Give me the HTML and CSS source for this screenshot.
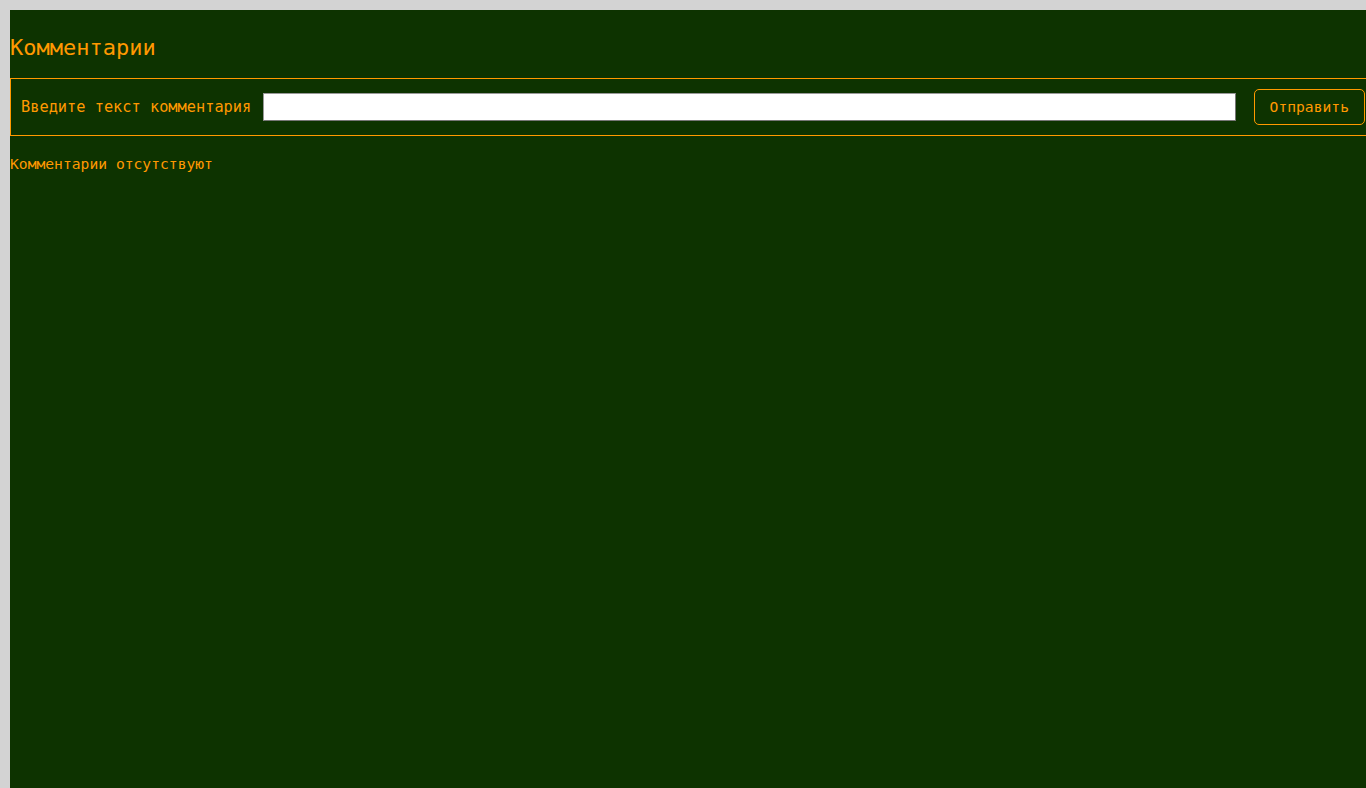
FILE: index.html
```html
<!DOCTYPE html>
<html lang="ru">
<head>
<meta charset="utf-8">
<title>Комментарии</title>
<link rel="stylesheet" href="styles.css">
</head>
<body>
<main class="page">
  <h2 class="title">Комментарии</h2>
  <form class="comment-form">
    <label class="comment-label" for="comment">Введите текст комментария</label>
    <input class="comment-input" id="comment" type="text">
    <button class="comment-btn" type="button">Отправить</button>
  </form>
  <p class="empty">Комментарии отсутствуют</p>
</main>
</body>
</html>
```
FILE: styles.css
```css
html, body {
  overflow: hidden;
}
body {
  margin: 10px 0 0 10px;
  background: #d3d3d3;
  font-family: "DejaVu Sans Mono", monospace;
}
.page {
  width: 100vw;
  min-height: calc(100vh - 10px);
  background: #0d3300;
  color: #ff9900;
  display: flow-root;
}
.title {
  margin: 25px 0 17px;
  font-size: 22px;
  line-height: 26px;
  font-weight: normal;
}
.comment-form {
  display: flex;
  align-items: center;
  border: 1px solid #ff9900;
  padding: 10px;
  height: 36px;
}
.comment-label {
  font-size: 15.3px;
  margin-right: 12px;
  white-space: nowrap;
}
.comment-input {
  flex: 1;
  height: 28px;
  box-sizing: border-box;
  border: 1px solid #777;
  border-top-color: #999;
  border-left-color: #999;
  background: #fff;
  margin: 0 18px 0 0;
  padding: 0 4px;
}
.comment-btn {
  height: 36px;
  box-sizing: border-box;
  padding: 0 15px 1px;
  background: transparent;
  border: 1px solid #ff9900;
  border-radius: 5px;
  color: #ff9900;
  font-family: "DejaVu Sans Mono", monospace;
  font-size: 14.67px;
}
.empty {
  margin: 19px 0 0;
  font-size: 14.67px;
}
```
